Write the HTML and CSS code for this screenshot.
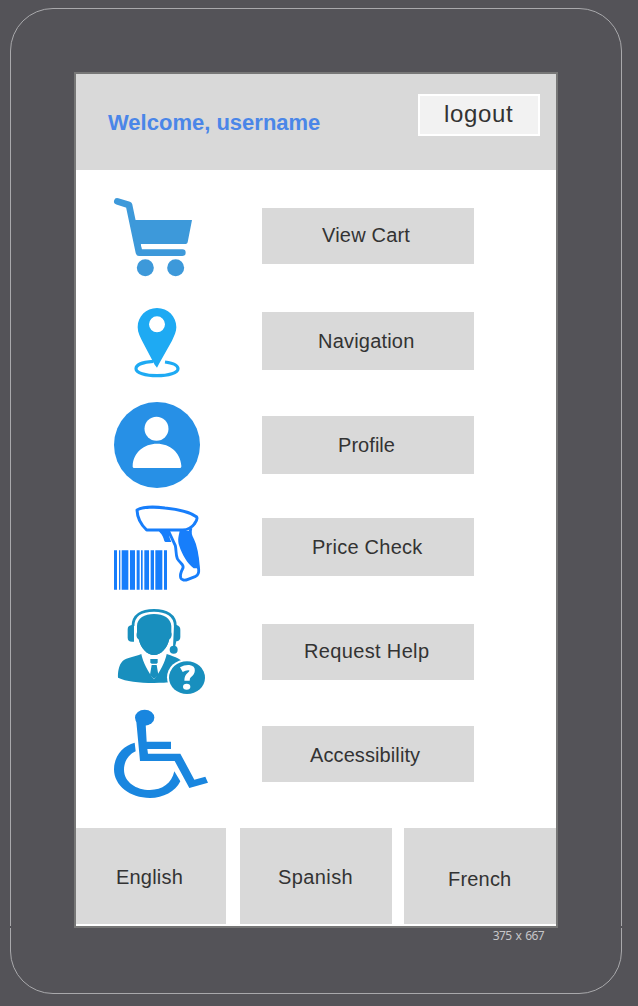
FILE: index.html
```html
<!DOCTYPE html>
<html lang="en">
<head>
<meta charset="utf-8">
<title>Shopping kiosk</title>
<link rel="stylesheet" href="styles.css">
</head>
<body>
<div class="device">
  <div class="screen">
    <header class="header">
      <h1 class="welcome">Welcome, username</h1>
      <button class="logout">logout</button>
    </header>
    <main class="menu">
      <div class="row row-cart">
        <svg class="icon" viewBox="0 0 360 300" fill="#3d99da">
          <path d="M52 49L87 60L117 203H247" fill="none" stroke="#3d99da" stroke-width="20" stroke-linecap="round" stroke-linejoin="round"/>
          <path d="M98 105H276L263 172Q262 177 257 177H122L126 199H112Z"/>
          <circle cx="136" cy="248" r="25.5"/><circle cx="227" cy="248" r="25.5"/>
        </svg>
        <button class="item">View Cart</button>
      </div>
      <div class="row row-nav">
        <svg class="icon" viewBox="0 0 360 300" fill="#1eaaf3">
          <path fill-rule="evenodd" d="M171 39C138 39 113 64 113 97C113 113 121 128 130 145L164 209L171 218L178 205L216 137C223 122 229 111 229 97C229 64 204 39 171 39ZM171 64A24 24 0 1 1 171 112A24 24 0 1 1 171 64Z"/>
          <path d="M160 199C130 201 108 209 108 221C108 233 136 242 171 242C206 242 234 233 234 221C234 211 216 204 195 201" fill="none" stroke="#1eaaf3" stroke-width="9.500"/>
        </svg>
        <button class="item">Navigation</button>
      </div>
      <div class="row row-profile">
        <svg class="icon" viewBox="0 0 360 300" fill="#fff">
          <circle cx="171" cy="150" r="129" fill="#2790e6"/>
          <circle cx="169.500" cy="101.500" r="36"/>
          <path d="M98 212C100 172 132 146 171 146C210 146 241 172 244 212Q245 219 238 219H104Q97 219 98 212Z"/>
        </svg>
        <button class="item">Profile</button>
      </div>
      <div class="row row-price">
        <svg class="icon" viewBox="0 0 360 300" fill="#177efb">
          <path d="M42 151h9v118h-9zM57 151h4v118h-4zM65 151h20v118h-20zM90 151h15v118h-15zM110 151h9v118h-9zM123 151h5v118h-5zM133 151h14v118h-14zM152 151h10v118h-10zM166 151h21v118h-21zM192 151h9v118h-9z"/>
          <path d="M205 92L226 137C229 151 227 164 232 176C239 189 253 193 249 204C245 212 239 222 242 233C245 241 254 242 264 238L287 229C295 225 297 218 296 208C293 171 290 142 278 119C271 107 268 98 273 84" fill="#fff" stroke="#177efb" stroke-width="8.500" stroke-linejoin="round"/>
          <path d="M111 30C128 21 165 20 195 24C235 28 272 38 289 50C294 55 289 64 283 72C276 82 266 89 248 90H140C125 76 112 56 111 30Z" fill="#fff" stroke="#177efb" stroke-width="9" stroke-linejoin="round"/>
          <path d="M175 91H208V106C208 115 211 119 214 126H197C191 124 192 114 187 107C183 100 179 98 175 91ZM239 92H272C269 105 280 116 286 136C295 162 296 184 299 210L290 205H281C262 191 246 163 238 138C231 118 237 106 239 92Z"/>
        </svg>
        <button class="item">Price Check</button>
      </div>
      <div class="row row-help">
        <svg class="icon" viewBox="0 0 360 300" fill="#188fbe">
          <path d="M99 78C99 46 125 31 162 31C199 31 226 46 226 78" fill="none" stroke="#188fbe" stroke-width="8.500"/>
          <path d="M102 75V125H96Q83 125 83 113V88Q83 76 96 75ZM222 75H230Q241 78 241 89V111Q241 123 229 124L225 142H219Z"/>
          <circle cx="221" cy="149" r="12"/>
          <path d="M162 42C190 42 213 55 214 78V97C217 104 214 116 208 118C201 146 183 165 162 165C141 165 123 146 116 118C110 116 108 105 111 97V78C111 55 134 42 162 42Z"/>
          <path d="M124 162L162 237L200 162C226 171 247 178 259 196L259 238C235 245 205 249 162 249C116 249 78 244 54 233C53 218 56 195 68 183C80 173 105 170 124 162Z"/>
          <path d="M124 163C129 186 144 217 162 238C180 217 195 186 200 163Q182 176 162 176Q142 176 124 163Z" fill="#fff"/>
          <path d="M116 118C123 146 141 165 162 165C183 165 201 146 208 118Z"/>
          <path d="M151 177H173V188L170 191H155L151 188ZM155 195H170L175 224L162 237L150 224Z"/>
          <ellipse cx="260" cy="232" rx="59" ry="54" fill="#fff"/>
          <ellipse cx="261" cy="233" rx="54" ry="49"/>
          <path d="M244 209Q256 202 267 203C281 205 278 218 268 225Q261 230 261 242" fill="none" stroke="#fff" stroke-width="16"/>
          <ellipse cx="260" cy="260" rx="11" ry="9" fill="#fff"/>
        </svg>
        <button class="item">Request Help</button>
      </div>
      <div class="row row-access">
        <svg class="icon icon-access" viewBox="0 0 360 315" fill="#1986df">
          <ellipse cx="134" cy="53" rx="29" ry="24"/>
          <path d="M108 55H136L140 125H213V147H142L144 161H241L283 239L316 230L324 248L268 264L224 183H120Z"/>
          <path d="M104 128L107 154C87 163 72 183 72 209C72 246 109 270 150 270C187 270 215 250 223 214L241 244C226 275 190 294 150 294C90 294 42 257 42 208C42 168 69 137 104 128Z"/>
        </svg>
        <button class="item">Accessibility</button>
      </div>
    </main>
    <footer class="languages">
      <button class="lang lang-en">English</button>
      <button class="lang lang-es">Spanish</button>
      <button class="lang lang-fr">French</button>
    </footer>
  </div>
  <div class="size">375 x 667</div>
  <span class="notch notch-left"></span>
  <span class="notch notch-right"></span>
</div>
</body>
</html>
```
FILE: styles.css
```css
* { box-sizing: border-box; }

body {
  margin: 0;
  padding: 8px 16px 12px 10px;
  height: 1006px;
  background: #545358;
  font-family: "Liberation Sans", Arial, sans-serif;
  color: #333;
}

button {
  display: block;
  border: 0;
  margin: 0;
  padding: 0;
  font: inherit;
  color: inherit;
  text-align: left;
  white-space: nowrap;
}

.device {
  position: relative;
  width: 612px;
  height: 986px;
  border: 1px solid #a9a9ac;
  border-radius: 43px;
  padding: 63px 0 0 63px;
}

.screen {
  width: 484px;
  height: 856px;
  border: 2px solid #777;
  background: #fff;
}

.header {
  display: flex;
  justify-content: space-between;
  height: 96px;
  padding: 20px 16px 0 32px;
  background: #d9d9d9;
}

.welcome {
  margin: 16px 0 0;
  font-size: 22px;
  line-height: 26px;
  font-weight: bold;
  color: #4a86e8;
}

.logout {
  width: 122px;
  height: 42px;
  padding: 0 0 3px 24px;
  border: 2px solid #fff;
  background: #f2f2f2;
  font-size: 24px;
  letter-spacing: 0.65px;
}

.menu { height: 658px; }

.row {
  display: flex;
  align-items: flex-start;
  gap: 42px;
  padding-left: 24px;
}

.icon { display: block; width: 120px; height: 100px; }
.icon-access { height: 105px; }

.item {
  width: 212px;
  height: 58px;
  background: #d9d9d9;
  font-size: 20px;
}

.row-cart { height: 120px; }
.row-cart .icon { margin-top: 15px; }
.row-cart .item { height: 56px; margin-top: 38px; padding: 0 0 2px 60px; letter-spacing: 0.2px; }

.row-nav { height: 105px; }
.row-nav .icon { margin-top: 5px; }
.row-nav .item { margin-top: 22px; padding-left: 56px; letter-spacing: 0.2px; }

.row-profile { height: 105px; }
.row-profile .item { margin-top: 21px; padding-left: 76px; letter-spacing: 0.05px; }

.row-price { height: 100px; }
.row-price .item { margin-top: 18px; padding-left: 50px; letter-spacing: 0.25px; }

.row-help { height: 100px; }
.row-help .item { height: 56px; margin-top: 24px; padding: 0 0 2px 42px; letter-spacing: 0.35px; }

.row-access { height: 128px; }
.row-access .item { height: 56px; margin-top: 26px; padding: 2px 0 0 48px; letter-spacing: 0.1px; }

.languages { display: flex; }

.lang {
  height: 96px;
  padding-top: 2px;
  background: #d9d9d9;
  font-size: 20px;
}

.lang-en { width: 150px; margin-right: 14px; padding-left: 40px; letter-spacing: 0.2px; }
.lang-es { width: 152px; margin-right: 12px; padding-left: 38px; letter-spacing: 0.4px; }
.lang-fr { width: 152px; padding: 6px 0 0 44px; letter-spacing: 0.2px; }

.size {
  width: 470px;
  font-family: "Noto Sans", sans-serif;
  font-size: 12px;
  line-height: 16px;
  letter-spacing: -0.6px;
  word-spacing: 1.5px;
  text-align: right;
  color: #c6c6c8;
}

/* Breaks in the outline level with the bottom edge of the screen */
.notch {
  position: absolute;
  top: 917px;
  width: 1px;
  height: 2px;
  background: #545358;
}
.notch-left { left: -1px; }
.notch-right { right: -1px; }
```
